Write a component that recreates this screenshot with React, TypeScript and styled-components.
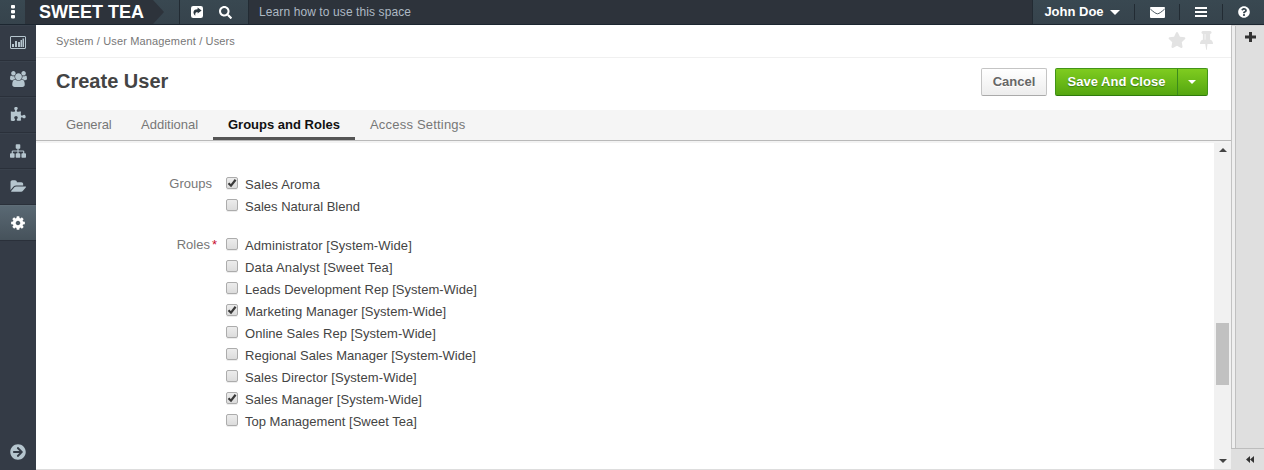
import React from "react";
import styled, { createGlobalStyle } from "styled-components";
import { FaArrowCircleRight, FaSearch, FaQuestionCircle, FaStar } from "react-icons/fa";

const Global = createGlobalStyle`
  * { box-sizing: border-box; }
  html, body { margin: 0; height: 100%; overflow: hidden; }
  body { font-family: "Liberation Sans", Arial, sans-serif; font-size: 13px; color: #444; background: #fff; }
  svg { display: block; flex: none; }
`;

const Page = styled.div`
  display: flex;
  flex-direction: column;
  width: 1264px;
  height: 470px;
  overflow: hidden;
`;

const Header = styled.header`
  display: flex;
  flex: none;
  height: 25px;
  background: #2d333b;
  border-bottom: 1px solid #1c2630;
  color: #fff;
`;

const raised = "linear-gradient(#394851, #36434c)";

const DotsButton = styled.div`
  width: 25px;
  background: ${raised};
  display: flex;
  justify-content: center;
  align-items: center;
`;

const BrandArea = styled.div`
  width: 155px;
  background: ${raised};
  border-right: 1px solid #222b33;
`;

const Brand = styled.div`
  width: 139px;
  height: 24px;
  padding-left: 14px;
  background: #2d333b;
  clip-path: polygon(0 0, 128px 0, 139px 12px, 128px 24px, 0 24px);
  font-size: 18px;
  line-height: 25px;
  font-weight: bold;
  white-space: nowrap;
`;

const Tools = styled.div`
  width: 69px;
  display: flex;
  align-items: center;
  gap: 16px;
  padding-left: 11px;
  background: ${raised};
  border-right: 1px solid #222b33;
`;

const Hint = styled.div`
  flex: 1;
  padding-left: 10px;
  font-size: 12px;
  line-height: 24px;
  letter-spacing: 0.1px;
  color: #adb9c4;
`;

const UserArea = styled.div`
  display: flex;
  align-items: center;
  width: 232px;
  background: ${raised};
  border-left: 1px solid #222b33;
`;

const HeaderItem = styled.div<{ $w: number; $first?: boolean }>`
  display: flex;
  align-items: center;
  justify-content: center;
  width: ${(p) => p.$w}px;
  height: 16px;
  padding-right: ${(p) => (p.$first ? 3 : 0)}px;
  border-left: ${(p) => (p.$first ? "0" : "1px solid #222b33")};
`;

const UserName = styled.span`
  font-size: 13px;
  font-weight: bold;
  line-height: 16px;
  margin-right: 6px;
`;

const Body = styled.div`
  display: flex;
  flex: 1;
  min-height: 0;
`;

const Sidebar = styled.nav`
  display: flex;
  flex-direction: column;
  flex: none;
  width: 36px;
  background: #343b46;
  color: #b5c5ce;
`;

const SideItem = styled.div<{ $active?: boolean }>`
  display: flex;
  align-items: center;
  justify-content: center;
  height: 36px;
  border-bottom: 1px solid #2a303a;
  box-shadow: inset 0 1px 0 ${(p) => (p.$active ? "#5f6d77" : "#39414c")};
  background: ${(p) => (p.$active ? "linear-gradient(#5a6974, #46525b)" : "transparent")};
  color: ${(p) => (p.$active ? "#fff" : "inherit")};
`;

const SideFooter = styled.div`
  display: flex;
  justify-content: center;
  margin-top: auto;
  padding-bottom: 10px;
`;

const Main = styled.main`
  display: flex;
  flex-direction: column;
  width: 1195px;
  flex: none;
`;

const CrumbBar = styled.div`
  display: flex;
  justify-content: space-between;
  flex: none;
  height: 33px;
  padding: 0 18px 0 20px;
  border-bottom: 1px solid #f0f0f0;
  font-size: 11px;
  line-height: 32px;
  letter-spacing: 0.15px;
  color: #777;
`;

const CrumbActions = styled.div`
  display: flex;
  gap: 14px;
  padding-top: 6px;
  color: #e3e3e3;
`;

const TitleBar = styled.div`
  display: flex;
  flex: none;
  justify-content: space-between;
  height: 52px;
  padding: 10px 23px 0 20px;
`;

const Title = styled.h1`
  margin: 0;
  font-size: 20px;
  line-height: 27px;
  color: #444;
`;

const Actions = styled.div`
  display: flex;
  gap: 8px;
  height: 28px;
`;

const CancelButton = styled.div`
  width: 66px;
  border: 1px solid #c4c4c4;
  border-bottom-color: #aaa;
  border-radius: 2px;
  background: linear-gradient(#fff, #ededed);
  color: #666;
  font-weight: bold;
  line-height: 25px;
  text-align: center;
  text-shadow: 0 1px 0 #fff;
`;

const SaveGroup = styled.div`
  display: flex;
  width: 153px;
  border: 1px solid #429418;
  border-bottom-color: #2f7a0c;
  border-radius: 2px;
  background: linear-gradient(#7fcc20, #55a610);
  color: #fff;
  font-weight: bold;
  line-height: 25px;
  text-shadow: 0 1px 1px #3d7a10;
`;

const SaveLabel = styled.div`
  width: 121px;
  text-align: center;
`;

const SaveToggle = styled.div`
  display: flex;
  flex: 1;
  align-items: center;
  justify-content: center;
  padding-right: 2px;
  border-left: 1px solid #3c8a1c;
`;

const Caret = styled.i<{ $size: number; $color: string; $up?: boolean }>`
  width: 0;
  height: 0;
  border: ${(p) => p.$size}px solid transparent;
  border-${(p) => (p.$up ? "bottom" : "top")}-color: ${(p) => p.$color};
  border-${(p) => (p.$up ? "top" : "bottom")}-width: 0;
`;

const Tabs = styled.div`
  display: flex;
  flex: none;
  height: 31px;
  padding-left: 15px;
  background: #f5f5f5;
  border-bottom: 1px solid #b9b9b9;
`;

const Tab = styled.div<{ $w: number; $active?: boolean; $ls: number }>`
  width: ${(p) => p.$w}px;
  padding-left: 15px;
  line-height: 29px;
  white-space: nowrap;
  letter-spacing: ${(p) => p.$ls}px;
  color: ${(p) => (p.$active ? "#111" : "#777")};
  font-weight: ${(p) => (p.$active ? "bold" : "normal")};
  border-bottom: ${(p) => (p.$active ? "3px solid #555" : "0")};
`;

const Scroller = styled.div`
  display: flex;
  flex: 1;
  min-height: 0;
  border-top: 2px solid #f3f3f3;
  border-bottom: 1px solid #ddd;
`;

const Form = styled.div`
  flex: 1;
  padding: 30px 0 0 36px;
`;

const Field = styled.div`
  display: flex;
  margin-bottom: 17px;
`;

const Label = styled.div<{ $pad: number }>`
  width: 145px;
  padding-right: ${(p) => p.$pad}px;
  text-align: right;
  line-height: 22px;
  color: #777;
`;

const Star = styled.span`
  color: #c8102e;
  margin-left: 2px;
`;

const Options = styled.div`
  flex: 1;
`;

const Option = styled.div<{ $ls: number }>`
  display: flex;
  height: 22px;
  gap: 7px;
  padding-left: 9px;
  line-height: 23px;
  letter-spacing: ${(p) => p.$ls}px;
  color: #444;
`;

const Box = styled.span`
  flex: none;
  width: 12px;
  height: 12px;
  margin-top: 4px;
  border: 1px solid #acacac;
  border-radius: 2px;
  background: linear-gradient(#ececec, #dcdcdc);
  box-shadow: 0 1px 0 #ededed;
`;

const Track = styled.div`
  display: flex;
  flex-direction: column;
  align-items: center;
  justify-content: space-between;
  width: 17px;
  padding: 5px 0 6px;
  background: #f1f1f1;
`;

const Thumb = styled.div`
  width: 13px;
  height: 62px;
  margin-top: 97px;
  background: #c1c1c1;
`;

const RightPanel = styled.aside`
  display: flex;
  flex-direction: column;
  flex: 1;
  background: #dfdfdf;
`;

const RightTop = styled.div`
  display: flex;
  justify-content: center;
  flex: 1;
  padding: 6px 0 0 4px;
  border-left: 1px solid #c2c2c2;
  border-top: 1px solid #d4d4d4;
  background: linear-gradient(90deg, #efefef 3px, #c0c0c0 3px, #c0c0c0 4px, #dfdfdf 4px);
`;

const RightFoot = styled.div`
  display: flex;
  justify-content: center;
  align-items: center;
  height: 22px;
  padding-left: 5px;
  border-top: 1px solid #bdbdbd;
`;

const groups: [string, boolean, number][] = [
  ["Sales Aroma", true, 0.12],
  ["Sales Natural Blend", false, 0],
];
const roles: [string, boolean, number][] = [
  ["Administrator [System-Wide]", false, 0.08],
  ["Data Analyst [Sweet Tea]", false, 0.14],
  ["Leads Development Rep [System-Wide]", false, 0.02],
  ["Marketing Manager [System-Wide]", true, 0.03],
  ["Online Sales Rep [System-Wide]", false, 0.05],
  ["Regional Sales Manager [System-Wide]", false, 0.01],
  ["Sales Director [System-Wide]", false, 0.07],
  ["Sales Manager [System-Wide]", true, 0.05],
  ["Top Management [Sweet Tea]", false, 0],
];

const OptionList = ({ items }: { items: [string, boolean, number][] }) => (
  <Options>
    {items.map(([text, checked, ls]) => (
      <Option key={text} $ls={ls}>
        <Box>
          {checked && (
            <svg width="10" height="10" viewBox="0 0 10 10">
              <path d="M1.500 5.200 L4 7.700 L8.600 1.800" fill="none" stroke="#3a3a3a" strokeWidth="2.200" />
            </svg>
          )}
        </Box>
        {text}
      </Option>
    ))}
  </Options>
);

const Glyph = ({ w, h, box, d }: { w: number; h: number; box: string; d: string }) => (
  <svg width={w} height={h} viewBox={box} fill="currentColor">
    <path d={d} />
  </svg>
);

const UsersIcon = () => (
  <Glyph w={17} h={16} box="64 0 1920 1792" d="M657 896q-162 5-265 128h-134q-82 0-138-40.500t-56-118.500q0-353 124-353 6 0 43.500 21t97.500 42.500 119 21.500q67 0 133-23-5 37-5 66 0 139 81 256zm1071 637q0 120-73 189.500t-194 69.500h-874q-121 0-194-69.500t-73-189.500q0-53 3.500-103.500t14-109 26.500-108.500 43-97.500 62-81 85.500-53.500 111.500-20q10 0 43 21.500t73 48 107 48 135 21.500 135-21.500 107-48 73-48 43-21.500q61 0 111.500 20t85.500 53.500 62 81 43 97.500 26.500 108.500 14 109 3.500 103.500zm-1024-1277q0 106-75 181t-181 75-181-75-75-181 75-181 181-75 181 75 75 181zm704 384q0 159-112.500 271.500t-271.500 112.500-271.500-112.500-112.500-271.500 112.500-271.500 271.500-112.500 271.500 112.500 112.500 271.500zm576 225q0 78-56 118.500t-138 40.500h-134q-103-123-265-128 81-117 81-256 0-29-5-66 66 23 133 23 59 0 119-21.500t97.500-42.500 43.500-21q124 0 124 353zm-128-609q0 106-75 181t-181 75-181-75-75-181 75-181 181-75 181 75 75 181z" />
);

const PuzzleIcon = () => (
  <Glyph w={16} h={16} box="0 0 1792 1792" d="M1755 1083q0 81-44.500 135t-123.500 54q-41 0-77.500-17.500t-59-38-56.500-38-71-17.500q-110 0-110 124 0 39 16 115t15 115v5q-22 0-33 1-34 3-97.500 11.500t-115.500 13.500-98 5q-61 0-103-26.500t-42-83.500q0-37 17.500-71t38-56.500 38-59 17.500-77.500q0-79-54-123.500t-135-44.500q-84 0-143 45.500t-59 127.500q0 43 15 83t33.500 64.500 33.500 53 15 50.500q0 45-46 89-37 35-117 35-95 0-245-24-9-2-27.500-4t-27.500-4l-13-2q-1 0-3-1-2 0-2-1v-1024q2 1 17.500 3.500t34 5 21.500 3.500q150 24 245 24 80 0 117-35 46-44 46-89 0-22-15-50.500t-33.500-53-33.500-64.500-15-83q0-82 59-127.500t144-45.500q80 0 134 44.500t54 123.500q0 41-17.500 77.500t-38 59-38 56.500-17.500 71q0 57 42 83.500t103 26.500q64 0 180-15t163-17v2q-1 2-3.500 17.500t-5 34-3.500 21.500q-24 150-24 245 0 80 35 117 44 46 89 46 22 0 50.500-15t53-33.500 64.500-33.500 83-15q82 0 127.500 59t45.500 143z" />
);

const SitemapIcon = () => (
  <Glyph w={16} h={16} box="0 0 1792 1792" d="M1792 1248v320q0 40-28 68t-68 28h-320q-40 0-68-28t-28-68v-320q0-40 28-68t68-28h96v-192h-512v192h96q40 0 68 28t28 68v320q0 40-28 68t-68 28h-320q-40 0-68-28t-28-68v-320q0-40 28-68t68-28h96v-192h-512v192h96q40 0 68 28t28 68v320q0 40-28 68t-68 28h-320q-40 0-68-28t-28-68v-320q0-40 28-68t68-28h96v-192q0-52 38-90t90-38h512v-192h-96q-40 0-68-28t-28-68v-320q0-40 28-68t68-28h320q40 0 68 28t28 68v320q0 40-28 68t-68 28h-96v192h512q52 0 90 38t38 90v192h96q40 0 68 28t28 68z" />
);

const FolderIcon = () => (
  <Glyph w={16} h={15} box="0 0 1943 1792" d="M1943 952q0 31-31 66l-336 396q-43 51-120.500 86.500t-143.500 35.500h-1088q-34 0-60.500-13t-26.500-43q0-31 31-66l336-396q43-51 120.500-86.500t143.500-35.500h1088q34 0 60.500 13t26.500 43zm-343-344v160h-832q-94 0-197 47.500t-164 119.500l-337 396-5 6q0-4-.5-12.500t-.5-12.500v-960q0-92 66-158t158-66h320q92 0 158 66t66 158v32h544q92 0 158 66t66 158z" />
);

const GearIcon = () => (
  <Glyph w={16} h={16} box="0 0 1792 1792" d="M1152 896q0-106-75-181t-181-75-181 75-75 181 75 181 181 75 181-75 75-181zm512-109v222q0 12-8 23t-20 13l-185 28q-19 54-39 91 35 50 107 138 10 12 10 25t-9 23q-27 37-99 108t-94 71q-12 0-26-9l-138-108q-44 23-91 38-16 136-29 186-7 28-36 28h-222q-14 0-24.500-8.500t-11.500-21.500l-28-184q-49-16-90-37l-141 107q-10 9-25 9-14 0-25-11-126-114-165-168-7-10-7-23 0-12 8-23 15-21 51-66.500t54-70.500q-27-50-41-99l-183-27q-13-2-21-12.500t-8-23.500v-222q0-12 8-23t19-13l186-28q14-46 39-92-40-57-107-138-10-12-10-24 0-10 9-23 26-36 98.500-107.500t94.500-71.500q13 0 26 10l138 107q44-23 91-38 16-136 29-186 7-28 36-28h222q14 0 24.500 8.500t11.500 21.500l28 184q49 16 90 37l142-107q9-9 24-9 13 0 25 10 129 119 165 170 7 8 7 22 0 12-8 23-15 21-51 66.500t-54 70.500q26 50 41 98l183 28q13 2 21 12.500t8 23.500z" />
);

const PinIcon = () => (
  <Glyph w={13} h={19} box="320 128 1152 1664" d="M800 864v-448q0-14-9-23t-23-9-23 9-9 23v448q0 14 9 23t23 9 23-9 9-23zm672 352q0 26-19 45t-45 19h-429l-51 483q-2 12-10.500 20.500t-20.500 8.500h-1q-27 0-32-27l-76-485h-404q-26 0-45-19t-19-45q0-123 78.500-221.500t177.500-98.500v-512q-52 0-90-38t-38-90 38-90 90-38h640q52 0 90 38t38 90-38 90-90 38v512q99 0 177.500 98.500t78.500 221.500z" />
);

const DotsIcon = () => (
  <svg width="4" height="14" fill="#fff">
    <rect y="0" width="4" height="3.400" rx=".8" />
    <rect y="5" width="4" height="3.400" rx=".8" />
    <rect y="10" width="4" height="3.400" rx=".8" />
  </svg>
);

const ShareIcon = () => (
  <svg width="12" height="12" viewBox="0 0 12 12">
    <rect width="12" height="12" rx="2.200" fill="#fff" />
    <path d="M6.600 1.600 L10.600 4.600 L6.600 7.600 V5.900 C4.800 5.900 4 6.800 4.300 9.800 C1.200 7 2.200 3.300 6.600 3.300 Z" fill="#2c3840" />
  </svg>
);

const MailIcon = () => (
  <svg width="15" height="11" viewBox="0 0 15 11">
    <rect width="15" height="11" rx="1" fill="#fff" />
    <path d="M.3 2 C3 4.400 5.800 6.800 7.500 6.800 S12 4.400 14.700 2" fill="none" stroke="#4b5962" strokeWidth="1" />
  </svg>
);

const MenuIcon = () => (
  <svg width="12" height="10" fill="#fff">
    <rect width="12" height="2" />
    <rect y="4" width="12" height="2" />
    <rect y="8" width="12" height="2" />
  </svg>
);

const ChartIcon = () => (
  <svg width="16" height="13" viewBox="0 0 16 13">
    <rect x=".5" y=".5" width="15" height="12" rx=".5" fill="none" stroke="#b5c5ce" />
    <path d="M2 8h2v3H2zM5 5h2v6H5zM8 6h2v5H8zM10.500 4h1.500v7h-1.500zM12.500 2.500h1.500v8.500h-1.500z" fill="#b5c5ce" />
  </svg>
);

const PlusIcon = () => (
  <svg width="11" height="10" fill="#333">
    <rect x="4" width="3" height="10" />
    <rect y="3.500" width="11" height="3" />
  </svg>
);

const CollapseIcon = () => (
  <svg width="8" height="7" fill="#333">
    <path d="M4 0v7L0 3.500zM8 0v7L4 3.500z" />
  </svg>
);

export default function App() {
  return (
    <Page>
      <Global />
      <Header>
        <DotsButton><DotsIcon /></DotsButton>
        <BrandArea><Brand>SWEET TEA</Brand></BrandArea>
        <Tools>
          <ShareIcon />
          <FaSearch size={13} />
        </Tools>
        <Hint>Learn how to use this space</Hint>
        <UserArea>
          <HeaderItem $w={101} $first>
            <UserName>John Doe</UserName>
            <Caret $size={5} $color="#fff" />
          </HeaderItem>
          <HeaderItem $w={45}><MailIcon /></HeaderItem>
          <HeaderItem $w={43}><MenuIcon /></HeaderItem>
          <HeaderItem $w={42}><FaQuestionCircle size={12} /></HeaderItem>
        </UserArea>
      </Header>
      <Body>
        <Sidebar>
          <SideItem><ChartIcon /></SideItem>
          <SideItem><UsersIcon /></SideItem>
          <SideItem><PuzzleIcon /></SideItem>
          <SideItem><SitemapIcon /></SideItem>
          <SideItem><FolderIcon /></SideItem>
          <SideItem $active><GearIcon /></SideItem>
          <SideFooter><FaArrowCircleRight size={16} /></SideFooter>
        </Sidebar>
        <Main>
          <CrumbBar>
            <span>System / User Management / Users</span>
            <CrumbActions>
              <FaStar size={18} />
              <PinIcon />
            </CrumbActions>
          </CrumbBar>
          <TitleBar>
            <Title>Create User</Title>
            <Actions>
              <CancelButton>Cancel</CancelButton>
              <SaveGroup>
                <SaveLabel>Save And Close</SaveLabel>
                <SaveToggle><Caret $size={4} $color="#fff" /></SaveToggle>
              </SaveGroup>
            </Actions>
          </TitleBar>
          <Tabs>
            <Tab $w={75} $ls={-0.1}>General</Tab>
            <Tab $w={87} $ls={0}>Additional</Tab>
            <Tab $w={142} $ls={0} $active>Groups and Roles</Tab>
            <Tab $w={130} $ls={0.2}>Access Settings</Tab>
          </Tabs>
          <Scroller>
            <Form>
              <Field>
                <Label $pad={5}>Groups</Label>
                <OptionList items={groups} />
              </Field>
              <Field>
                <Label $pad={0}>Roles<Star>*</Star></Label>
                <OptionList items={roles} />
              </Field>
            </Form>
            <Track>
              <Caret $size={4} $color="#444" $up />
              <Thumb />
              <Caret $size={4} $color="#444" />
            </Track>
          </Scroller>
        </Main>
        <RightPanel>
          <RightTop><PlusIcon /></RightTop>
          <RightFoot><CollapseIcon /></RightFoot>
        </RightPanel>
      </Body>
    </Page>
  );
}
